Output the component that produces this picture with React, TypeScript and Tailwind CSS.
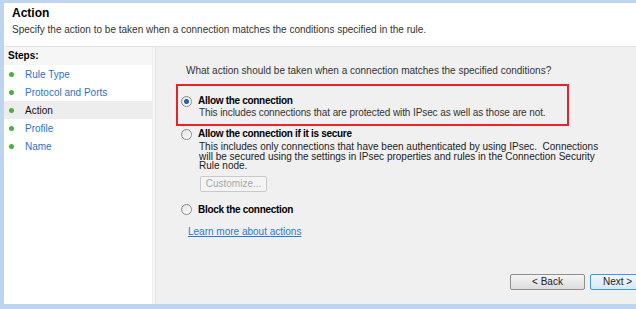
import React from 'react';

const steps = ['Rule Type', 'Protocol and Ports', 'Action', 'Profile', 'Name'];

const Radio: React.FC<{ checked?: boolean }> = ({ checked }) => (
  <span className="w-[11px] h-[11px] rounded-full border border-[#8d8d8d] bg-gradient-to-br from-[#e2e2e2] to-white flex items-center justify-center shrink-0">
    {checked && <span className="w-[5px] h-[5px] rounded-full bg-[#2a5db8]" />}
  </span>
);

const StepRow: React.FC<{ label: string; active: boolean }> = ({ label, active }) => (
  <div className={`h-[18px] flex items-center pl-[5px] ${active ? 'bg-[#ededed]' : ''}`}>
    <span className="w-[5px] h-[5px] rounded-full bg-[#46b23a] mr-[11px]" />
    <span className={active ? 'text-[#111]' : 'text-[#2a72d0]'}>{label}</span>
  </div>
);

export default function App() {
  return (
    <div
      className="w-[636px] h-[309px] bg-[#bdd5ee] pt-[3px] pl-[4px] pb-[5px] flex flex-col overflow-hidden text-[10px] text-[#222]"
      style={{ fontFamily: '"Liberation Sans", Arial, sans-serif' }}
    >
      {/* header */}
      <div className="h-[44px] bg-white border-b border-[#e2e2e2] pl-[8px] shrink-0">
        <div className="pt-[2px] text-[12px] font-bold text-black leading-[16px]">Action</div>
        <div className="mt-[3px] pl-[-1px] leading-[12px] text-[#333]">
          Specify the action to be taken when a connection matches the conditions specified in the rule.
        </div>
      </div>

      <div className="flex flex-1 min-h-0">
        {/* steps */}
        <div className="w-[149px] bg-white border-r border-[#ececec] shrink-0">
          <div className="h-[18px] bg-[#f6f6f6] pl-[4px] font-bold text-black leading-[18px]">Steps:</div>
          {steps.map((s) => (
            <StepRow key={s} label={s} active={s === 'Action'} />
          ))}
        </div>
        <div className="w-[3px] bg-[#f7f7f7] border-r border-[#e3e3e3] shrink-0" />

        {/* main */}
        <div className="flex-1 bg-[#f0f0f0] flex flex-col pl-[20px]">
          <div className="mt-[18px] pl-[10px] leading-[12px] text-[#333]">
            What action should be taken when a connection matches the specified conditions?
          </div>

          <div className="mt-[7px] w-[393px] h-[42px] border-2 border-[#e8212b] pl-[3px] pt-[9px]">
            <div className="flex items-center gap-[6px] leading-[12px]">
              <Radio checked />
              <span className="font-bold text-black tracking-[-0.3px]">Allow the connection</span>
            </div>
            <div className="pl-[18px] leading-[12px] text-[#333] tracking-[-0.1px]">
              This includes connections that are protected with IPsec as well as those are not.
            </div>
          </div>

          <div className="mt-[2px] pl-[5px] flex items-center gap-[6px] leading-[12px]">
            <Radio />
            <span className="font-bold text-black tracking-[-0.3px]">Allow the connection if it is secure</span>
          </div>
          <div className="mt-[2px] pl-[23px] leading-[9.5px] text-[#222]">
            This includes only connections that have been authenticated by using IPsec.&nbsp; Connections
            <br />
            will be secured using the settings in IPsec properties and rules in the Connection Security
            <br />
            Rule node.
          </div>
          <div className="ml-[24px] mt-[5px] w-[67px] h-[16px] border border-[#c9c9c9] rounded-[2px] bg-[#f4f4f4] text-[#a8a8a8] flex items-center justify-center">
            Customize...
          </div>

          <div className="mt-[12px] pl-[5px] flex items-center gap-[6px] leading-[12px]">
            <Radio />
            <span className="font-bold text-black tracking-[-0.3px]">Block the connection</span>
          </div>

          <div className="mt-[10px] pl-[12px] leading-[12px] text-[#2a78d6] underline">Learn more about actions</div>

          <div className="mt-auto mb-[14px] flex justify-end gap-[5px] mr-[-9px]">
            <button className="w-[75px] h-[16px] border border-[#8f8f8f] rounded-[2px] bg-gradient-to-b from-[#f5f5f5] to-[#dcdcdc] text-[#222] leading-[14px]">
              &lt; Back
            </button>
            <button className="w-[55px] h-[16px] border border-[#3c9ae0] rounded-[2px] bg-gradient-to-b from-[#f2f8fd] to-[#d6e8f6] text-[#222] leading-[14px]">
              Next &gt;
            </button>
          </div>
        </div>
      </div>
    </div>
  );
}
